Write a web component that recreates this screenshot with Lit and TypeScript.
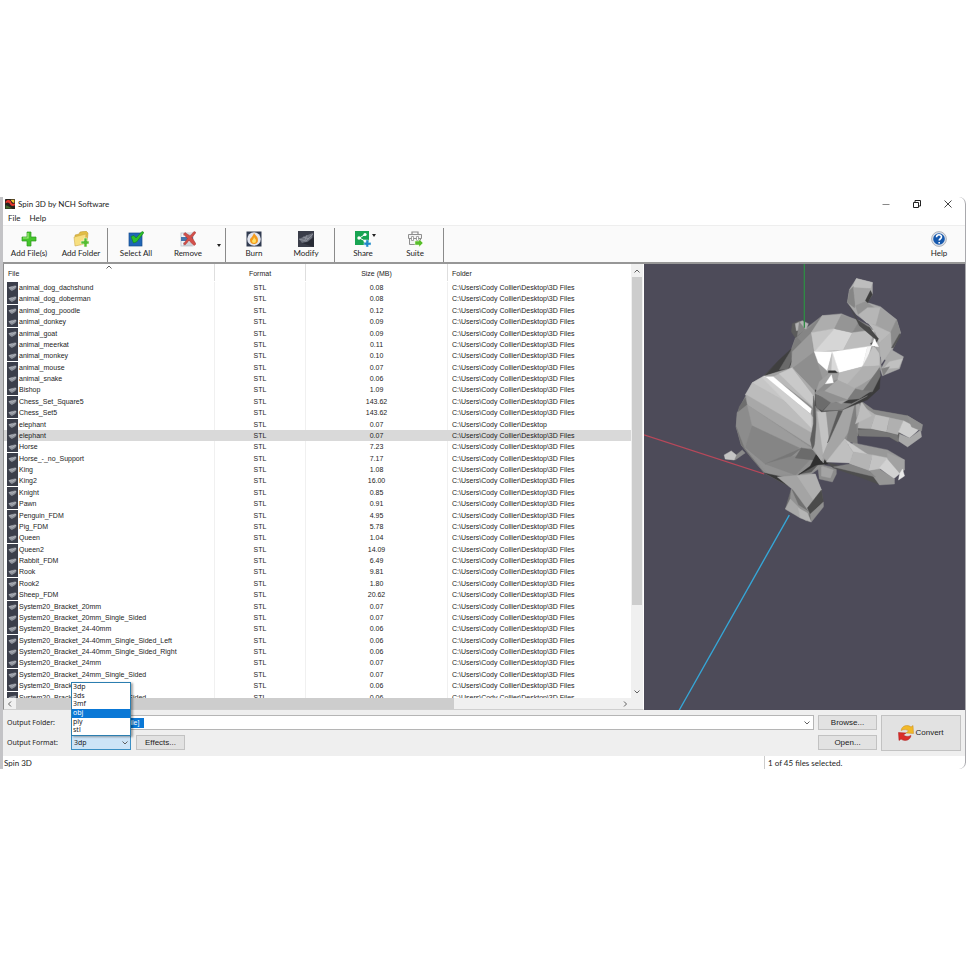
import { LitElement, html, svg, css } from "lit";
import { customElement, state } from "lit/decorators.js";
import { classMap } from "lit/directives/class-map.js";

interface FileRow {
  name: string;
  size: string;
  folder: string;
}

const FOLDER = "C:\\Users\\Cody Collier\\Desktop\\3D Files";

const FILES: FileRow[] = (
  [
    ["animal_dog_dachshund", "0.08"],
    ["animal_dog_doberman", "0.08"],
    ["animal_dog_poodle", "0.12"],
    ["animal_donkey", "0.09"],
    ["animal_goat", "0.09"],
    ["animal_meerkat", "0.11"],
    ["animal_monkey", "0.10"],
    ["animal_mouse", "0.07"],
    ["animal_snake", "0.06"],
    ["Bishop", "1.09"],
    ["Chess_Set_Square5", "143.62"],
    ["Chess_Set5", "143.62"],
    ["elephant", "0.07", "C:\\Users\\Cody Collier\\Desktop"],
    ["elephant", "0.07"],
    ["Horse", "7.23"],
    ["Horse_-_no_Support", "7.17"],
    ["King", "1.08"],
    ["King2", "16.00"],
    ["Knight", "0.85"],
    ["Pawn", "0.91"],
    ["Penguin_FDM", "4.95"],
    ["Pig_FDM", "5.78"],
    ["Queen", "1.04"],
    ["Queen2", "14.09"],
    ["Rabbit_FDM", "6.49"],
    ["Rook", "9.81"],
    ["Rook2", "1.80"],
    ["Sheep_FDM", "20.62"],
    ["System20_Bracket_20mm", "0.07"],
    ["System20_Bracket_20mm_Single_Sided", "0.07"],
    ["System20_Bracket_24-40mm", "0.06"],
    ["System20_Bracket_24-40mm_Single_Sided_Left", "0.06"],
    ["System20_Bracket_24-40mm_Single_Sided_Right", "0.06"],
    ["System20_Bracket_24mm", "0.07"],
    ["System20_Bracket_24mm_Single_Sided", "0.07"],
    ["System20_Bracket_32mm", "0.06"],
    ["System20_Bracket_32mm_Single_Sided", "0.06"],
  ] as string[][]
).map(([name, size, folder]) => ({ name, size, folder: folder ?? FOLDER }));

const FORMATS = ["3dp", "3ds", "3mf", "obj", "ply", "stl"];

/* Faces of the low-poly model, painted back to front: [fill, points]. */
const FACES: [string, string][] = [
  // tail
  ["#8a8a8a", "732,451 737,455 743,450 746,453 736,460 726,459"],
  ["#c4c4c4", "725,455 732,451 737,455 735,460 726,459"],
  // far hind foot
  ["#8c8c8c", "818,464 837,468 837,474 833,482 820,479"],
  ["#a4a4a4", "822,466 834,470 831,478 822,476"],
  // far front leg
  ["#5c5c5c", "855,420 873,410 908,416 898,442 888,436 857,436"],
  ["#8b8b8b", "860,400 874,410 908,416 923,425 908,428 862,418"],
  ["#b3b3b3", "862,406 876,415 871,429 858,428"],
  ["#c0c0c0", "876,415 890,418 887,432 871,429"],
  ["#b0b0b0", "890,418 904,421 898,435 887,432"],
  ["#cecece", "904,421 920,429 910,438 899,432"],
  ["#a9a9a9", "910,438 921,430 922,437 908,447 899,441 900,434"],
  ["#777777", "857,430 871,429 898,435 899,442 890,437 860,436"],
  ["#8f8f8f", "908,416 923,425 922,431 912,427"],
  // torso base
  ["#8f8f8f", "797,336 823,316 850,360 860,400 858,436 827,463 793,488 765,473 742,445 737,427 738,413 753,383 765,376 792,350"],
  ["#3f3f3f", "765,376 779,361 792,349 797,352 789,370"],
  ["#6a6a6a", "780,370 792,350 795,353 789,369"],
  ["#7d7d7d", "792,350 797,336 812,332 800,352 793,360"],
  ["#858585", "797,336 810,328 823,316 812,350 806,347"],
  ["#9b9b9b", "793,352 812,333 814,352 822,366 792,368"],
  ["#a2a2a2", "766,376 782,371 793,368 815,392 822,404"],
  ["#b9b9b9", "774,377 793,368 802,384 814,408 808,403"],
  ["#c9c9c9", "780,374 793,368 815,396 813,406"],
  ["#acacac", "793,368 815,391 815,397"],
  ["#8e8e8e", "794,368 815,352 825,379 817,392"],
  ["#9a9a9a", "815,352 829,372 824,381"],
  ["#c6c6c6", "753,383 765,376 814,420 814,434"],
  ["#ffffff", "765,377 774,377 812,409 811,414"],
  ["#bcbcbc", "753,383 746,395 812,440 815,418"],
  ["#cfcfcf", "763,378 766,377 812,415 812,428"],
  ["#a8a8a8", "747,395 748,405 812,446 814,434"],
  ["#6e6e6e", "746,398 748,406 738,416 740,407"],
  ["#8c8c8c", "738,413 748,405 754,426 745,448 737,427"],
  ["#747474", "737,427 745,448 765,473 752,458 742,445"],
  ["#9c9c9c", "748,405 812,448 800,449 753,426"],
  ["#858585", "753,426 800,448 766,464 746,448"],
  ["#929292", "746,448 765,464 796,474 770,475"],
  ["#777777", "766,464 802,448 790,458"],
  ["#868686", "766,464 790,457 818,452 796,475"],
  ["#6b6b6b", "802,448 814,450 822,461 796,458"],
  ["#5a5a5a", "800,474 822,461 812,472"],
  ["#2f2f2f", "818,452 829,464 817,465 799,475 811,466"],
  ["#383838", "765,473 792,479 798,490 789,486"],
  // flank
  ["#a0a0a0", "816,412 822,408 837,409 830,440 824,463 812,448"],
  ["#5f5f5f", "814,396 816,408 818,440 813,449 811,440 814,424"],
  ["#acacac", "818,415 827,412 830,444 822,461 815,450"],
  ["#c3c3c3", "818,412 826,412 830,437 824,455"],
  ["#929292", "827,411 843,411 830,443"],
  ["#5a5a5a", "839,411 844,411 831,440 828,443"],
  ["#a5a5a5", "844,410 856,398 862,408 849,432 829,462 823,456"],
  ["#7f7f7f", "856,402 858,444 847,441"],
  ["#bdbdbd", "862,402 872,416 856,424 860,411"],
  // near hind leg
  ["#717171", "792,489 786,509 810,522 824,506 822,490 812,478"],
  ["#a4a4a4", "778,477 815,474 822,490 810,512 794,490"],
  ["#b0b0b0", "798,476 816,474 822,490 814,500"],
  ["#929292", "792,489 799,505 810,512 807,521 790,508"],
  ["#a9a9a9", "786,509 791,499 800,508 801,518"],
  ["#b5b5b5", "799,508 808,513 812,522 801,518"],
  ["#4b4b4b", "822,490 824,502 811,514 808,508"],
  ["#8f8f8f", "811,514 824,502 824,507 812,522"],
  // near front leg
  ["#4e4e4e", "827,462 847,468 875,475 881,485 860,477 834,468"],
  ["#999999", "840,450 854,443 888,450 905,460 890,461 860,456"],
  ["#bfbfbf", "827,462 845,439 854,453 851,463"],
  ["#c9c9c9", "845,439 854,452 869,455 857,447"],
  ["#b4b4b4", "854,452 873,455 869,471 850,464"],
  ["#c3c3c3", "873,455 888,458 880,470 869,471"],
  ["#d2d2d2", "888,458 902,472 894,479 880,468"],
  ["#a2a2a2", "888,453 905,460 905,470 900,473 888,459"],
  ["#969696", "870,471 880,469 895,479 895,484 880,485"],
  ["#e9e9e9", "903,469 905,476 899,480 900,474"],
  ["#858585", "850,464 870,471 876,477 834,467"],
  // ear knob
  ["#5b5b5b", "793,324 800,321 803,332 796,338 792,332"],
  ["#b2b2b2", "796,324 803,321 809,324 807,329 797,331"],
  ["#858585", "800,322 806,330 798,336"],
  // jaw and shade below the head
  ["#3b3b3b", "816,390 828,396 860,398 873,391 876,374 881,374 880,389 868,400 843,410 822,412 816,406"],
  ["#6c6c6c", "816,394 832,402 823,411 817,408"],
  ["#858585", "832,402 852,404 868,396 843,410 824,411"],
  // head
  ["#a0a0a0", "812,333 823,316 842,314 856,320 870,327 878,340 882,368 864,390 842,404 816,394 820,382 829,374 815,352"],
  ["#adadad", "823,316 842,315 835,329 812,333"],
  ["#c6c6c6", "812,333 835,329 815,352"],
  ["#d6d6d6", "835,329 853,333 844,350 815,352"],
  ["#959595", "842,315 860,321 853,333 835,329"],
  ["#878787", "860,321 870,326 875,331 853,333"],
  ["#bdbdbd", "853,333 875,330 872,347 844,350"],
  ["#a2a2a2", "875,330 878,340 870,349 872,341"],
  ["#ffffff", "815,352 833,352 828,371 819,363"],
  ["#bdbdbd", "833,352 832,372 828,371"],
  ["#d9d9d9", "833,352 840,372 832,372"],
  ["#ffffff", "833,352 868,347 863,367 840,373"],
  ["#f4f4f4", "868,347 872,346 868,359 863,367"],
  ["#c4c4c4", "863,367 874,346 880,354 880,366"],
  ["#b0b0b0", "863,367 880,366 877,376 854,389 839,380"],
  ["#b9b9b9", "840,373 863,367 848,384 838,381"],
  ["#9c9c9c", "877,375 864,391 856,390"],
  ["#727272", "880,368 881,376 873,392 862,393"],
  ["#a9a9a9", "819,390 838,380 856,389 848,400"],
  ["#8d8d8d", "816,393 827,383 838,380 824,392"],
  ["#7b7b7b", "848,400 856,389 864,391 872,391 860,399"],
  ["#909090", "816,393 824,391 848,400 832,403"],
  ["#ffffff", "832,375 834,383 826,384"],
  ["#333333", "829,371 836,371 838,373 829,373"],
  // trunk
  ["#4a4a4a", "850,306 858,320 870,328 878,341 874,338 860,326"],
  ["#a8a8a8", "857,279 873,283 873,295 868,303 881,307 897,320 901,333 893,350 889,362 881,357 876,343 878,333 869,324 857,315 848,303 850,290"],
  ["#bdbdbd", "857,279 873,283 871,289 858,291 853,288"],
  ["#858585", "850,291 854,287 857,300 855,308 848,303"],
  ["#a3a3a3", "854,288 871,289 866,303 856,306"],
  ["#3d3d3d", "871,291 873,295 868,304 866,301"],
  ["#939393", "856,306 866,302 875,308 867,317 859,315"],
  ["#b6b6b6", "859,315 868,308 881,308 876,325 867,323"],
  ["#a2a2a2", "881,308 897,320 891,333 877,325"],
  ["#bababa", "869,323 891,333 880,343 876,333"],
  ["#8b8b8b", "897,320 901,333 892,349 891,333"],
  ["#b2b2b2", "880,343 891,333 892,349 882,364"],
  ["#444444", "869,327 879,339 875,347 871,344 877,340"],
  ["#ffffff", "875,339 879,347 872,346"],
  ["#555555", "900,334 901,336 894,348 892,348"],
  // tusk
  ["#a9a9a9", "892,350 904,357 900,369 883,376 881,370"],
  ["#c0c0c0", "890,362 903,359 899,368 884,369"],
  ["#828282", "882,369 890,367 884,376"],
];

const icons = {
  add: svg`<path d="M6 1h4v5h5v4h-5v5H6v-5H1V6h5z" fill="#45c52c" stroke="#2b9a1c" stroke-width=".7"/><path d="M7 2v5H2" fill="none" stroke="#a5ec7f" stroke-width="1.2"/>`,
  folder: svg`<path d="M2 4l4-1 1-2 6-1 2 2-1 10-11 2z" fill="#e2bd45" stroke="#b99531" stroke-width=".5"/><path d="M1 6l12-3-1 10-10 2z" fill="#f7df80" stroke="#c9a33d" stroke-width=".5"/><path d="M11 7h3v3h2v3h-2v3h-3v-3H8v-3h3z" fill="#56bd32" stroke="#f5f8df" stroke-width=".6"/>`,
  select: svg`<rect x="1" y="2" width="13" height="13" fill="#1f66b7" stroke="#174d8d" stroke-width=".7"/><path d="M3 5.500l3-1 2 2.500 6-6.500 2 1-7.500 9.500-3 1z" fill="#2ec02a" stroke="#12811a" stroke-width=".6"/>`,
  remove: svg`<rect x="1" y="2" width="12" height="13" fill="#f3f5f8" stroke="#b4bdc6" stroke-width=".7"/><path d="M1 6h12v4H1z" fill="#4575ac"/><path d="M3 4h8M3 12h9M3 14h9" stroke="#a8b2bc"/><path d="M5 1.500l5 3.500 4-4.500 2 1-4 5 4 6.500-2 1.500-5-5-4 4.500-1.500-1 4-5.500-4-4.500z" fill="#d3504a" stroke="#a63330" stroke-width=".5"/>`,
  burn: svg`<rect x=".5" y=".5" width="15" height="15" fill="#303b50"/><circle cx="8" cy="8" r="6.8" fill="#e2e5ee"/><path d="M8 2c2 3 4 4 4 7a4 4 0 01-8 0c0-2 2-2 4-7z" fill="#f39a1e"/><path d="M8 6c1 2 2 2 2 4a2 2 0 01-4 0c0-1 2-2 2-4z" fill="#ffe064"/>`,
  model: svg`<rect width="16" height="16" fill="#3a3d49"/><path d="M1 8l6-3 8-3-1 5-5 4-5 1z" fill="#6d717c"/><path d="M1 8l7 2 7-7M5 6l6 2M9 4l-2 5" stroke="#9da1ab" stroke-width=".6" fill="none"/><path d="M4 12l6-1 6-5v10z" fill="#282b35"/>`,
  item: svg`<rect width="16" height="16" fill="#3b3e4a"/><path d="M2 8l4-2 6-1 2 2-2 3-5 3-3-2z" fill="#8d919a"/><path d="M3 8l5 1 5-3" stroke="#c2c5cb" fill="none"/>`,
  share: svg`<rect width="14" height="14" fill="#18a452"/><path d="M10 3.500L4.500 7l5.500 3" stroke="#fff" fill="none"/><circle cx="10" cy="3.500" r="1.600" fill="#fff"/><circle cx="4" cy="7" r="1.700" fill="#fff"/><circle cx="10" cy="10" r="1.500" fill="#fff"/><path d="M11 9h2.500v2.500H16V14h-2.500v2H11v-2H9v-2.500h2z" fill="#2186c9" stroke="#c7e8f4" stroke-width=".5"/>`,
  suite: svg`<path d="M5 3V1h6v2" fill="none" stroke="#8a8a8a" stroke-width="1.200"/><path d="M1.500 3.500h13v4h-13zM2.500 7.500h11v6h-11z" fill="#f3f3f3" stroke="#8f8f8f"/><path d="M4.500 5.500h2v4h-2zM9.500 5.500h2v4h-2z" fill="#fff" stroke="#8f8f8f" stroke-width=".8"/><path d="M8 10h4V8l4 4-4 4v-2H8z" fill="#58bd2b" stroke="#e9ffd8" stroke-width=".5"/>`,
  help: svg`<circle cx="8" cy="8" r="7.400" fill="#dfe3ea" stroke="#929aa5" stroke-width=".7"/><circle cx="8" cy="8" r="5.800" fill="#1659ae"/><path d="M5.500 6.300c0-3.400 5-3.200 5-.3 0 1.800-2.300 1.700-2.300 3.600M8.200 11v1.600" stroke="#fff" stroke-width="1.600" fill="none"/>`,
  app: svg`<rect width="16" height="16" rx="1" fill="#28221d"/><path d="M1 4c4-4 8-2 9 1s3 3 6 2v3c-5 3-7 0-8-2S4 4 1 7z" fill="#e6332a"/><path d="M9 1h6v5c-3 0-4-2-6-5z" fill="#f4c534"/><path d="M1 10c4 0 6 4 11 5H1z" fill="#456b2f"/>`,
  convert: svg`<path d="M3 5.500C4 0 10-.5 13 2l2-1.500.5 8-7.500-.5 2.500-2C9 4.500 6.500 4 3 5.500z" fill="#f2b928" stroke="#c98a1c" stroke-width=".5"/><path d="M13 10.500c-1 5.500-7 6-10 3.500L1 15.500.500 7.500 8 8 5.500 10c1.500 1.500 4.500 2 7.500.5z" fill="#db2d29" stroke="#a81d1d" stroke-width=".5"/>`,
};

const icon = (name: keyof typeof icons) =>
  html`<svg class="icon" viewBox="0 0 16 16" aria-hidden="true">${icons[name]}</svg>`;

const chevron = (d: string) =>
  html`<svg class="chevron" viewBox="0 0 8 8" aria-hidden="true"><path d=${d} fill="none" stroke="#606060" /></svg>`;

const UP = "M1.500 5.500L4 3l2.500 2.500";
const DOWN = "M1.500 2.500L4 5l2.500-2.500";
const LEFT = "M5 1.500L2.500 4 5 6.500";
const RIGHT = "M3 1.500L5.500 4 3 6.500";

@customElement("app-root")
export class AppRoot extends LitElement {
  @state() private selected = 13;
  @state() private hovered = "obj";

  static styles = css`
    :host {
      display: flex;
      flex-direction: column;
      justify-content: center;
      min-height: 100vh;
      background: #fff;
      color: #1c1c1c;
      font: 8px/10px Lato, "Noto Sans", sans-serif;
    }
    * { box-sizing: border-box; }
    button, input, select { font: inherit; color: inherit; margin: 0; border-radius: 0; }
    .window {
      border-left: 3px solid #c3c3c6;
      border-right: 1px solid #a9a9ad;
      border-radius: 0 7px 7px 0;
      overflow: hidden;
    }
    .icon { display: block; width: 16px; height: 16px; flex: none; }
    .chevron { display: block; width: 8px; height: 8px; flex: none; }

    .title { display: flex; align-items: center; height: 14px; padding: 0 2px; }
    .title .icon { width: 10px; height: 10px; }
    .title h1 { flex: 1; margin: 0 0 0 3px; font: inherit; }
    .caption { width: 31px; height: 14px; padding: 0; border: 0; background: none; display: grid; place-items: center; }
    .caption svg { width: 10px; height: 10px; }
    .menu { display: flex; height: 14px; gap: 9px; padding-left: 5px; align-items: center; }
    .menu button { border: 0; padding: 0; background: none; }

    .toolbar {
      display: flex;
      height: 39px;
      padding-top: 2px;
      background: #fafafa;
      border-top: 1px solid #eee;
      border-bottom: 2px solid #979797;
    }
    .group { display: flex; padding: 0 2px; border-right: 1px solid #8a8a8a; }
    .group:first-child { padding: 0; }
    .tool {
      position: relative;
      display: flex;
      flex-direction: column;
      align-items: center;
      gap: 1px;
      width: 52px;
      padding: 3px 0 0;
      border: 0;
      background: none;
      white-space: nowrap;
    }
    .spacer { flex: 1; }
    .more { width: 9px; padding: 0; border: 0; background: none; display: grid; place-items: center; }
    .caret { width: 0; height: 0; border: 2px solid transparent; border-top: 3px solid #222; border-bottom: 0; }
    .tool .caret { position: absolute; top: 6px; right: 13px; }

    .main { display: grid; grid-template-columns: minmax(0, 2fr) minmax(0, 1fr); }
    .list {
      display: grid;
      grid-template-columns: minmax(0, 1fr) 12px;
      grid-template-rows: 434px 11px;
      border-left: 1px solid #8d8d8d;
      border-right: 1px solid #fff;
      border-bottom: 1px solid #cfcfcf;
      background: #fff;
    }
    .clip { overflow: hidden; font: 7px/11px "Liberation Sans", sans-serif; }
    table { display: block; }
    thead { display: block; padding-bottom: 1px; }
    tbody { display: flex; flex-direction: column; height: 421px; }
    tr { display: grid; grid-template-columns: 211px 91px 142px minmax(0, 1fr); }
    tbody tr { flex: 1; }
    th { position: relative; font-weight: normal; height: 17px; padding: 4px 4px 0; text-align: left; border-right: 1px solid #dedede; }
    td { padding: 0 4px; white-space: nowrap; border-right: 1px solid #f0f0f0; }
    .chosen td { border-color: #d9d9d9; }
    th:last-child, td:last-child { border-right: 0; }
    td:nth-child(n + 2), th:nth-child(n + 2) { text-align: center; }
    td:nth-child(4), th:nth-child(4) { text-align: left; }
    td:first-child { display: flex; gap: 1px; padding-left: 3px; }
    td .icon { width: 11px; height: 11px; }
    .chosen { background: #d9d9d9; }
    .sort { position: absolute; top: -1px; left: 0; right: 0; display: flex; justify-content: center; }
    .vbar { display: flex; flex-direction: column; align-items: center; background: #f0f0f0; padding: 3px 0 2px; gap: 2px; }
    .vtrack { flex: 1; align-self: stretch; padding: 0 1px 81px; display: flex; }
    .thumb { flex: 1; background: #cdcdcd; }
    .hbar { grid-column: 1 / 3; display: flex; align-items: center; background: #f0f0f0; padding: 0 14px 0 2px; gap: 2px; }
    .htrack { flex: 1; align-self: stretch; display: flex; padding-right: 165px; }
    .view { position: relative; background: #4d4b59; overflow: hidden; }
    .view svg { position: absolute; inset: 0; width: 100%; height: 100%; display: block; }

    .output {
      display: grid;
      grid-template-columns: 60px minmax(0, 1fr) 59px 80px;
      grid-template-rows: 15px 15px;
      gap: 5px 4px;
      padding: 5px 4px 6px;
      background: #efefef;
      align-items: center;
    }
    .output .label { font: 7px/10px "Noto Sans", sans-serif; white-space: nowrap; }
    .folder { display: flex; align-items: center; height: 15px; padding: 0 2px; background: #fff; border: 1px solid #b5b5b5; font: 7px/10px "Liberation Sans", sans-serif; }
    .folder input { width: 70px; height: 10px; padding: 0; border: 0; background: #0a78d6; color: #fff; }
    .folder button { margin-left: auto; border: 0; padding: 0; background: none; }
    .push { height: 15px; padding: 0; background: #e2e2e2; border: 1px solid #c2c2c2; font: 8px/10px "Liberation Sans", sans-serif; }
    .convert { grid-column: 4; grid-row: 1 / 3; height: 36px; display: flex; align-items: center; justify-content: center; gap: 1px; }
    .formats { display: flex; gap: 5px; }
    .combo { position: relative; width: 60px; display: flex; align-items: center; }
    .combo select { appearance: none; width: 60px; height: 15px; padding: 0 2px; border: 1px solid #3b8fc4; background: #cde4f7; font: 7px/10px "Noto Sans", sans-serif; outline: 0; }
    .combo .chevron { position: absolute; right: 2px; }
    .popup {
      position: absolute;
      left: 0;
      bottom: 14px;
      display: flex;
      flex-direction: column;
      width: 60px;
      height: 54px;
      margin: 0;
      padding: 0;
      list-style: none;
      background: #fff;
      border: 1px solid #2b7eb0;
      box-shadow: 2px 1px 2px #0005;
      font: 7px/8px "Noto Sans", sans-serif;
    }
    .popup li { flex: 1; padding-left: 1px; }
    .popup .hot { background: #0a78d6; color: #fff; }
    .effects { width: 49px; }
    .status { display: grid; grid-template-columns: minmax(0, 1fr) 201px; height: 13px; line-height: 14px; padding-left: 1px; }
    .count { border-left: 1px solid #ccc; padding-left: 3px; }
  `;

  private tool(name: keyof typeof icons, label: string, caret = false) {
    return html`<button class="tool">${icon(name)}<span>${label}</span>${caret ? html`<i class="caret"></i>` : ""}</button>`;
  }

  render() {
    return html`
      <div class="window">
        <header class="title">
          ${icon("app")}
          <h1>Spin 3D by NCH Software</h1>
          <button class="caption" aria-label="Minimize"><svg viewBox="0 0 10 10"><path d="M1.500 5.500h7" stroke="#888" /></svg></button>
          <button class="caption" aria-label="Restore"><svg viewBox="0 0 10 10"><path d="M1.500 3.500h5v5h-5zM3 3V1.500h5.500V7H7" fill="none" stroke="#222" /></svg></button>
          <button class="caption" aria-label="Close"><svg viewBox="0 0 10 10"><path d="M1.500 1.500l7 7M8.500 1.500l-7 7" stroke="#444" /></svg></button>
        </header>
        <nav class="menu"><button>File</button><button>Help</button></nav>
        <div class="toolbar" role="toolbar">
          <div class="group">${this.tool("add", "Add File(s)")}${this.tool("folder", "Add Folder")}</div>
          <div class="group">
            ${this.tool("select", "Select All")}${this.tool("remove", "Remove")}
            <button class="more" aria-label="Remove options"><i class="caret"></i></button>
          </div>
          <div class="group">${this.tool("burn", "Burn")}${this.tool("model", "Modify")}</div>
          <div class="group">${this.tool("share", "Share", true)}${this.tool("suite", "Suite")}</div>
          <div class="spacer"></div>
          ${this.tool("help", "Help")}
        </div>
        <main class="main">
          <section class="list">
            <div class="clip">
              <table>
                <thead>
                  <tr><th>File<span class="sort">${chevron(UP)}</span></th><th>Format</th><th>Size (MB)</th><th>Folder</th></tr>
                </thead>
                <tbody>
                  ${FILES.map(
                    (f, i) => html`<tr class=${classMap({ chosen: i === this.selected })} @click=${() => (this.selected = i)}>
                      <td>${icon("item")}<span>${f.name}</span></td>
                      <td>STL</td>
                      <td>${f.size}</td>
                      <td>${f.folder}</td>
                    </tr>`
                  )}
                </tbody>
              </table>
            </div>
            <div class="vbar">${chevron(UP)}<div class="vtrack"><div class="thumb"></div></div>${chevron(DOWN)}</div>
            <div class="hbar">${chevron(LEFT)}<div class="htrack"><div class="thumb"></div></div>${chevron(RIGHT)}</div>
          </section>
          <section class="view">
            <svg viewBox="645 264 320 446" preserveAspectRatio="xMidYMid slice" role="img" aria-label="elephant">
              <path d="M645 435l120 39" stroke="#b8485a" stroke-width="1.200" />
              <path d="M790 515L680 710" stroke="#35a7d8" stroke-width="1.300" />
              ${FACES.map(([fill, points]) => svg`<polygon points=${points} fill=${fill} stroke=${fill} stroke-width=".4" />`)}
              <path d="M805 264v64" stroke="#2f8c45" stroke-width="1.300" />
            </svg>
          </section>
        </main>
        <section class="output">
          <label class="label" for="folder">Output Folder:</label>
          <div class="folder">
            <input id="folder" value="[Same as source file]" />
            <button aria-label="Recent folders">${chevron(DOWN)}</button>
          </div>
          <button class="push">Browse...</button>
          <button class="push convert">${icon("convert")}Convert</button>
          <label class="label" for="format">Output Format:</label>
          <div class="formats">
            <div class="combo">
              <select id="format">${FORMATS.map((f) => html`<option>${f}</option>`)}</select>
              ${chevron(DOWN)}
              <ul class="popup" role="listbox">
                ${FORMATS.map(
                  (f) => html`<li role="option" class=${classMap({ hot: f === this.hovered })} @mouseenter=${() => (this.hovered = f)}>${f}</li>`
                )}
              </ul>
            </div>
            <button class="push effects">Effects...</button>
          </div>
          <button class="push">Open...</button>
        </section>
        <footer class="status"><span>Spin 3D</span><span class="count">1 of 45 files selected.</span></footer>
      </div>
    `;
  }
}
